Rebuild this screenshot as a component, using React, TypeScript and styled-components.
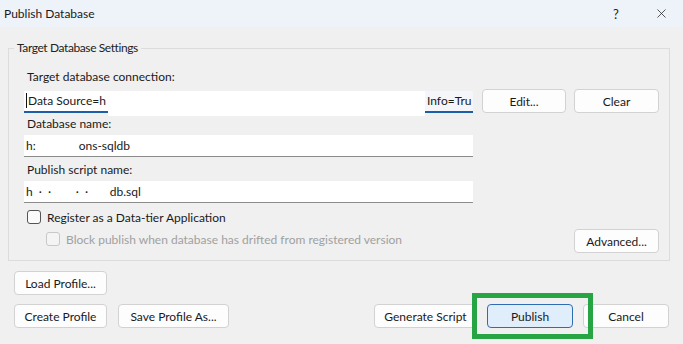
import styled, { createGlobalStyle } from "styled-components";
import { X } from "lucide-react";

const Global = createGlobalStyle`
  html, body {
    margin: 0;
    padding: 0;
    background: #f0f0f0;
  }
  * {
    box-sizing: border-box;
  }
`;

const Window = styled.div`
  width: 683px;
  height: 344px;
  background: #f0f0f0;
  font-family: "Segoe UI", Lato, "Noto Sans", sans-serif;
  font-size: 12px;
  color: #1a1a1a;
  display: flex;
  flex-direction: column;
  overflow: hidden;
`;

const TitleBar = styled.div`
  height: 27px;
  background: #eef2f9;
  display: flex;
  align-items: center;
  padding: 0 11px 0 4px;
`;

const Title = styled.div`
  flex: 1;
  font-size: 12px;
`;

const TitleIcon = styled.div<{ w: number; gap?: number }>`
  width: ${({ w }) => w}px;
  margin-right: ${({ gap }) => gap ?? 0}px;
  display: flex;
  justify-content: center;
  align-items: center;
  font-size: 13px;
  color: #222;
`;

const Group = styled.fieldset`
  margin: 13px 13px 0 8px;
  padding: 0 10px 7px 15px;
  border: 1px solid #dcdcdc;
  min-width: 0;
`;

const Legend = styled.legend`
  padding: 0 3px;
  margin-left: -10px;
  line-height: 16px;
  font-size: 12px;
  letter-spacing: -0.4px;
  color: #222;
`;

const Label = styled.div<{ top: number }>`
  margin-top: ${({ top }) => top}px;
  height: 18px;
  line-height: 18px;
  padding-left: 3px;
`;

const Row = styled.div`
  display: flex;
  align-items: flex-start;
  margin-top: 3px;
`;

const ConnBox = styled.div`
  width: 449px;
  margin: 2px 9px 0 0;
  height: 24px;
  display: flex;
  align-items: flex-start;
`;

const Seg = styled.div<{ w: number; shade?: boolean }>`
  width: ${({ w }) => w}px;
  height: 22px;
  line-height: 20px;
  padding-left: 2px;
  background: ${({ shade }) => (shade ? "#f4f6f9" : "#ffffff")};
  border-bottom: 2px solid #1c5fa8;
  white-space: nowrap;
`;

const Caret = styled.span`
  border-left: 1px solid #111;
  margin-right: 1px;
`;

const Blank = styled.div`
  flex: 1;
  height: 25px;
  background: #ffffff;
`;

const TextBox = styled.div`
  width: 449px;
  height: 22px;
  margin-top: 2px;
  background: #ffffff;
  border-bottom: 1px solid #8c8c8c;
  line-height: 21px;
  padding-left: 2px;
  white-space: pre;
`;

const Button = styled.button<{ w: number; primary?: boolean; top?: number }>`
  width: ${({ w }) => w}px;
  height: 24px;
  margin-top: ${({ top }) => top ?? 0}px;
  padding: 0;
  border-radius: 4px;
  border: 1px solid ${({ primary }) => (primary ? "#2f6db3" : "#d2d2d2")};
  background: ${({ primary }) => (primary ? "#e0edfa" : "#fdfdfd")};
  font-family: inherit;
  font-size: 12px;
  color: #1a1a1a;
  flex-shrink: 0;
`;

const ButtonGap = styled.div`
  width: 8px;
`;

const Check = styled.label<{ disabled?: boolean }>`
  display: flex;
  align-items: center;
  gap: 6px;
  height: 18px;
  color: ${({ disabled }) => (disabled ? "#a0a0a0" : "#1a1a1a")};
  margin-top: ${({ disabled }) => (disabled ? 4 : 0)}px;
`;

const Box = styled.span<{ disabled?: boolean }>`
  width: 14px;
  height: 14px;
  border-radius: 3px;
  border: 1px solid ${({ disabled }) => (disabled ? "#c8c8c8" : "#555")};
  background: ${({ disabled }) => (disabled ? "#f4f4f4" : "#fbfbfb")};
`;

const CheckRow = styled.div`
  margin-top: 5px;
  padding-left: 3px;
`;

const LastRow = styled.div`
  display: flex;
  justify-content: space-between;
  align-items: flex-start;
  height: 27px;
  padding-left: 22px;
`;

const Footer = styled.div`
  padding: 10px 14px 0 14px;
  display: flex;
  flex-direction: column;
  gap: 9px;
`;

const FooterRow = styled.div`
  display: flex;
  align-items: center;
  gap: 11px;
`;

const Actions = styled.div`
  margin-left: auto;
  display: flex;
  align-items: center;
  gap: 10px;
`;

const Highlight = styled.div`
  position: relative;
  display: flex;

  &::after {
    content: "";
    position: absolute;
    left: -15px;
    right: -20px;
    top: -11px;
    bottom: -11px;
    border: 5px solid #27a545;
  }
`;

export default function App() {
  return (
    <Window>
      <Global />
      <TitleBar>
        <Title>Publish Database</Title>
        <TitleIcon w={24} gap={22}>
          ?
        </TitleIcon>
        <TitleIcon w={22}>
          <X size={15} strokeWidth={1.2} />
        </TitleIcon>
      </TitleBar>

      <Group>
        <Legend>Target Database Settings</Legend>
        <Label top={12}>Target database connection:</Label>
        <Row>
          <ConnBox>
            <Seg w={84}>
              <Caret />
              Data Source=h
            </Seg>
            <Blank />
            <Seg w={48} shade>
              Info=Tru
            </Seg>
          </ConnBox>
          <Button w={84}>Edit...</Button>
          <ButtonGap />
          <Button w={85}>Clear</Button>
        </Row>
        <Label top={0}>Database name:</Label>
        <TextBox>{"h:              ons-sqldb"}</TextBox>
        <Label top={4}>Publish script name:</Label>
        <TextBox>{"h  ·  ·        ·  ·       db.sql"}</TextBox>
        <CheckRow>
          <Check>
            <Box />
            Register as a Data-tier Application
          </Check>
        </CheckRow>
        <LastRow>
          <Check disabled>
            <Box disabled />
            Block publish when database has drifted from registered version
          </Check>
          <Button w={85} top={3}>
            Advanced...
          </Button>
        </LastRow>
      </Group>

      <Footer>
        <FooterRow>
          <Button w={93}>Load Profile...</Button>
        </FooterRow>
        <FooterRow>
          <Button w={93}>Create Profile</Button>
          <Button w={111}>Save Profile As...</Button>
          <Actions>
            <Button w={103}>Generate Script</Button>
            <Highlight>
              <Button w={86} primary>
                Publish
              </Button>
            </Highlight>
            <Button w={86}>Cancel</Button>
          </Actions>
        </FooterRow>
      </Footer>
    </Window>
  );
}
